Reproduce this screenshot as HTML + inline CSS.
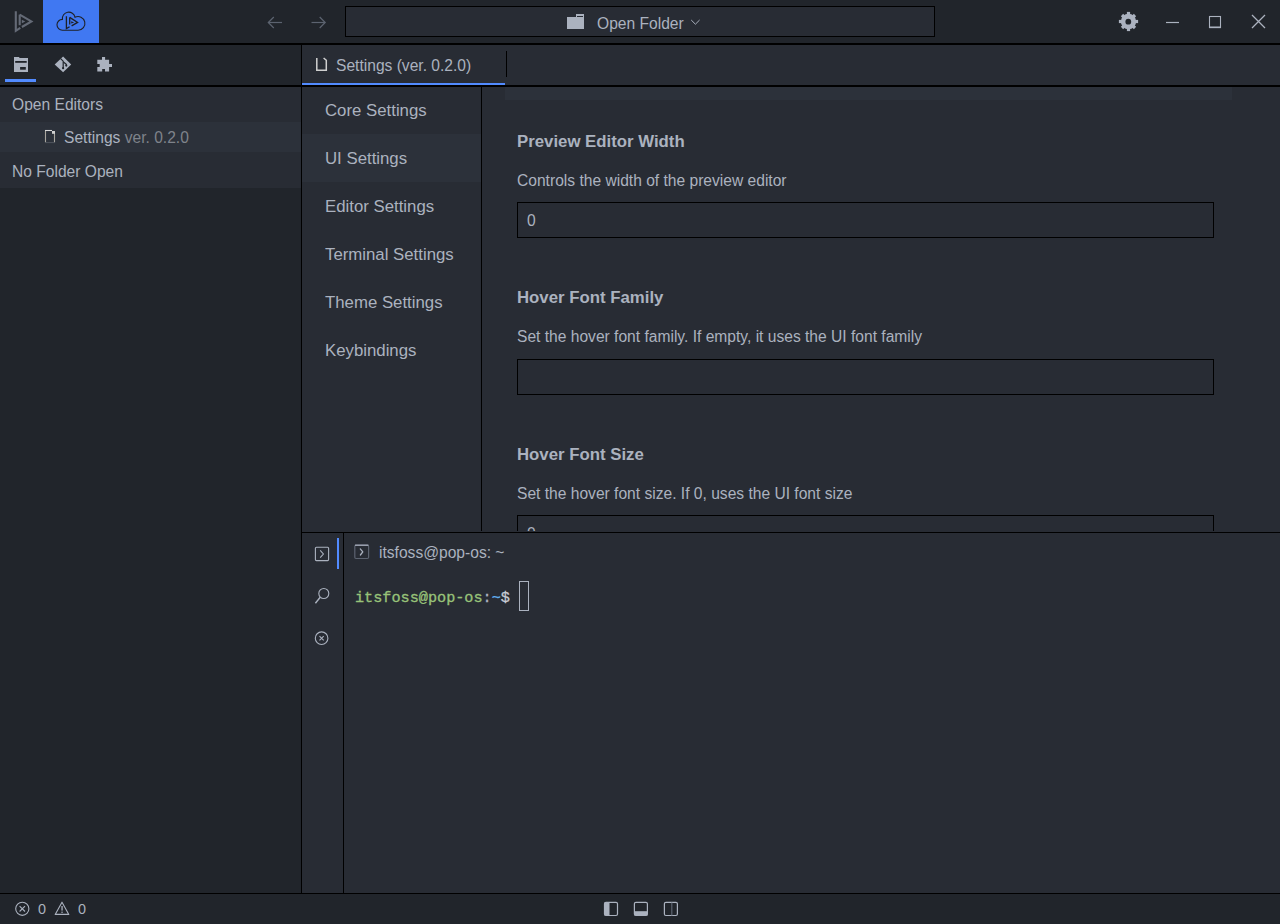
<!DOCTYPE html>
<html><head><meta charset="utf-8">
<style>
html,body{margin:0;padding:0;width:1280px;height:924px;overflow:hidden;background:#282C34;}
body{position:relative;font-family:"Liberation Sans",sans-serif;color:#ABB2BF;}
.a{position:absolute;}
.t{position:absolute;line-height:1;white-space:nowrap;}
.bk{position:absolute;background:#000;}
svg{position:absolute;overflow:visible;}
.ov{pointer-events:none;}
</style></head><body>

<!-- title bar -->
<div class="a" style="left:0;top:0;width:1280px;height:43px;background:#21252B;"></div>
<div class="bk" style="left:0;top:43px;width:1280px;height:2px;"></div>
<div class="a" style="left:43px;top:0;width:56px;height:43px;background:#4078F2;"></div>
<div class="a" style="left:345px;top:6px;width:588px;height:29px;border:1px solid #000;background:#282C34;"></div>
<div class="t" style="left:597px;top:15.6px;font-size:15.6px;color:#ABB2BF;">Open Folder</div>

<!-- left panel -->
<div class="a" style="left:0;top:45px;width:301px;height:848px;background:#21252B;"></div>
<div class="bk" style="left:301px;top:45px;width:1px;height:848px;"></div>
<div class="bk" style="left:0;top:85px;width:301px;height:2px;"></div>
<div class="a" style="left:5px;top:79px;width:31px;height:3px;background:#528BFF;"></div>
<div class="a" style="left:0;top:87px;width:301px;height:35px;background:#282C34;"></div>
<div class="a" style="left:0;top:122px;width:301px;height:30px;background:#2C313A;"></div>
<div class="a" style="left:0;top:152px;width:301px;height:36px;background:#282C34;"></div>
<div class="t" style="left:12px;top:96.6px;font-size:15.6px;">Open Editors</div>
<div class="t" style="left:64px;top:129.6px;font-size:15.6px;">Settings <span style="color:#7F838B">ver. 0.2.0</span></div>
<div class="t" style="left:12px;top:163.6px;font-size:15.6px;">No Folder Open</div>

<!-- editor tab bar -->
<div class="bk" style="left:302px;top:85px;width:978px;height:2px;"></div>
<div class="a" style="left:302px;top:83px;width:203px;height:2px;background:#528BFF;"></div>
<div class="bk" style="left:506px;top:51px;width:1px;height:26px;"></div>
<div class="t" style="left:336px;top:57.6px;font-size:15.6px;">Settings (ver. 0.2.0)</div>

<!-- settings sidebar -->
<div class="bk" style="left:481px;top:87px;width:1px;height:444px;"></div>
<div class="a" style="left:302px;top:134px;width:179px;height:48px;background:#2C313A;"></div>
<div class="t" style="left:325px;top:102.6px;font-size:16.8px;">Core Settings</div>
<div class="t" style="left:325px;top:150.6px;font-size:16.8px;">UI Settings</div>
<div class="t" style="left:325px;top:198.6px;font-size:16.8px;">Editor Settings</div>
<div class="t" style="left:325px;top:246.6px;font-size:16.8px;">Terminal Settings</div>
<div class="t" style="left:325px;top:294.6px;font-size:16.8px;">Theme Settings</div>
<div class="t" style="left:325px;top:342.6px;font-size:16.8px;">Keybindings</div>

<!-- settings content -->
<div class="a" style="left:482px;top:87px;width:798px;height:444px;overflow:hidden;">
  <div class="a" style="left:23px;top:0;width:727px;height:13px;background:#2C313A;"></div>
  <div class="t" style="left:35px;top:47.1px;font-size:16.8px;font-weight:bold;">Preview Editor Width</div>
  <div class="t" style="left:35px;top:85.6px;font-size:15.6px;">Controls the width of the preview editor</div>
  <div class="a" style="left:35px;top:115px;width:695px;height:34px;border:1px solid #000;"></div>
  <div class="t" style="left:45px;top:126.1px;font-size:15.6px;">0</div>

  <div class="t" style="left:35px;top:202.6px;font-size:16.8px;font-weight:bold;">Hover Font Family</div>
  <div class="t" style="left:35px;top:242.1px;font-size:15.6px;">Set the hover font family. If empty, it uses the UI font family</div>
  <div class="a" style="left:35px;top:272px;width:695px;height:34px;border:1px solid #000;"></div>

  <div class="t" style="left:35px;top:359.6px;font-size:16.8px;font-weight:bold;">Hover Font Size</div>
  <div class="t" style="left:35px;top:398.6px;font-size:15.6px;">Set the hover font size. If 0, uses the UI font size</div>
  <div class="a" style="left:35px;top:428px;width:695px;height:34px;border:1px solid #000;"></div>
  <div class="t" style="left:45px;top:439.1px;font-size:15.6px;">0</div>
</div>

<!-- terminal -->
<div class="bk" style="left:302px;top:532px;width:978px;height:1px;"></div>
<div class="bk" style="left:343px;top:533px;width:1px;height:360px;"></div>
<div class="a" style="left:337px;top:538px;width:2px;height:31px;background:#528BFF;"></div>
<div class="t" style="left:379px;top:545.1px;font-size:15.6px;">itsfoss@pop-os: ~</div>
<div class="t" style="left:355px;top:590.8px;font-size:15.2px;font-family:'Liberation Mono',monospace;-webkit-text-stroke:0.3px currentColor;"><span style="color:#98C379">itsfoss@pop-os</span><span style="color:#ABB2BF">:</span><span style="color:#61AFEF">~</span><span style="color:#C8CCD4">$</span></div>
<div class="a" style="left:519px;top:581px;width:8px;height:28px;border:1px solid #ABB2BF;"></div>




<!-- status bar -->
<div class="bk" style="left:0;top:893px;width:1280px;height:1px;"></div>
<div class="a" style="left:0;top:894px;width:1280px;height:30px;background:#21252B;"></div>
<div class="t" style="left:38px;top:901.6px;font-size:14.4px;">0</div>
<div class="t" style="left:78px;top:901.6px;font-size:14.4px;">0</div>

<svg class="ov" width="1280" height="924" viewBox="0 0 1280 924" style="left:0;top:0;">
<!-- lapce logo -->
<g fill="none" stroke="#646A76" stroke-width="2.1" stroke-linejoin="miter">
  <path d="M15.8,11.2 V30.8 L20.3,27.8"/>
  <path d="M19.7,14.6 V25.2"/>
  <path d="M19.7,14.6 L31.4,21.4 L21.9,27.0"/>
</g>
<polygon points="21.8,19.8 25.3,21.6 21.8,23.3" fill="#646A76"/>
<!-- cloud -->
<g fill="none" stroke="#1E2127" stroke-width="1.2">
  <path d="M62.4,30.25 A5.4,5.4 0 0 1 62.4,19.4 A6.4,6.4 0 0 1 75,17.2 A6.9,6.9 0 1 1 78,30.3 Z" stroke-width="1.1"/>
  <path d="M66.4,16.3 V28.6 L69.6,26.7" stroke-width="1.3"/>
  <path d="M69.7,17.4 V24.4" stroke-width="1.3"/>
  <path d="M69.7,17.4 L77.6,22.4 L71.6,25.9" stroke-width="1.3"/>
</g>
<polygon points="71.2,21.2 74.2,22.4 71.2,23.6" fill="#1E2127"/>
<!-- arrows -->
<g fill="none" stroke="#5C6370" stroke-width="1.2">
  <path d="M268.5,22.5 H282"/><path d="M273.8,17 L268.3,22.5 L273.8,28"/>
  <path d="M311.5,22.5 H325"/><path d="M319.7,17 L325.2,22.5 L319.7,28"/>
</g>
<!-- folder -->
<path d="M567,17 H576 V14 H584 V29 H567 Z" fill="#ABB2BF"/>
<rect x="577" y="16" width="6" height="1" fill="#282C34"/>
<path d="M691.2,20 L695.4,24.2 L699.6,20" fill="none" stroke="#ABB2BF" stroke-width="1"/>
<!-- gear -->
<g fill="#ABB2BF">
  <circle cx="1128.5" cy="21.5" r="7.7"/>
  <rect x="1126.9" y="11.9" width="3.2" height="19.2"/>
  <rect x="1118.9" y="19.9" width="19.2" height="3.2"/>
  <rect x="1126.9" y="12.3" width="3.2" height="18.4" transform="rotate(45 1128.5 21.5)"/>
  <rect x="1126.9" y="12.3" width="3.2" height="18.4" transform="rotate(-45 1128.5 21.5)"/>
</g>
<circle cx="1128.3" cy="21.7" r="2.9" fill="#21252B"/>
<!-- window controls -->
<path d="M1166,22.5 H1179" stroke="#ABB2BF" stroke-width="1.2"/>
<rect x="1209.5" y="16.5" width="11" height="11" fill="none" stroke="#ABB2BF" stroke-width="1.1"/>
<rect x="1209" y="26.5" width="12" height="1.6" fill="#ABB2BF"/>
<path d="M1252,15 L1265,28 M1265,15 L1252,28" stroke="#ABB2BF" stroke-width="1.3"/>
<!-- explorer icon -->
<path d="M14,57 H19 L19.6,58 H28 V72 H14 Z" fill="#ABB2BF"/>
<rect x="15.2" y="61" width="11.5" height="1.8" fill="#21252B"/>
<rect x="20.1" y="67" width="5.7" height="2.7" fill="#21252B"/>
<!-- git icon -->
<polygon points="54.7,64.5 63.1,56.6 71.2,64.5 63.1,72.3" fill="#ABB2BF"/>
<g fill="none" stroke="#21252B" stroke-width="1.2">
  <path d="M60.6,58.6 L63.2,61.2 V68"/>
  <path d="M63.4,62 L66.3,64.4 V65.6"/>
</g>
<circle cx="63.1" cy="68.2" r="1.1" fill="#21252B"/>
<circle cx="66.3" cy="65.6" r="1.1" fill="#21252B"/>
<!-- puzzle -->
<path d="M97.3,59.8 H102 V57 H105.1 V59.8 H109.1 V63.9 H112 V67 H109.1 V71.5 H105 V68.9 H102.2 V71.5 H97.3 V66.9 H99.7 V64 H97.3 Z" fill="#ABB2BF"/>
<!-- file icons -->
<path d="M45.5,130.5 V142.5 M54.5,133 V142.5" fill="none" stroke="#A8A59E" stroke-width="1.1"/>
<path d="M45,130.5 H52" fill="none" stroke="#D8D8D8" stroke-width="1.1"/>
<path d="M45,142.6 H55" fill="none" stroke="#50555E" stroke-width="1"/>
<rect x="52" y="131" width="3" height="2.8" fill="#D0D0D0"/>
<g fill="none" stroke="#D0D0D0" stroke-width="1.5">
  <path d="M316.8,57.9 V70.3 H326.3 V60.3 L323.6,58"/>
</g>
<!-- terminal column icons -->
<g fill="none" stroke="#ABB2BF" stroke-width="1.1">
  <rect x="315.4" y="547.3" width="13.2" height="13.3" rx="1"/>
  <path d="M320.2,550.4 L323.4,554 L320.2,557.6"/>
  <circle cx="323.8" cy="593.5" r="5"/>
  <path d="M320.2,597.3 L315.4,603.2" stroke-width="1.4"/>
  <circle cx="321.6" cy="638.2" r="6.3"/>
  <path d="M319.5,636.1 L323.7,640.3 M323.7,636.1 L319.5,640.3"/>
</g>
<!-- terminal tab icon -->
<rect x="354.8" y="545.2" width="13.8" height="13.3" rx="1.2" fill="none" stroke="#5C6370" stroke-width="1.2"/>
<path d="M355,545.2 H368.4" stroke="#ABB2BF" stroke-width="1.2"/>
<path d="M360.3,548.9 L362.8,551.8 L360.4,555" fill="none" stroke="#ABB2BF" stroke-width="1.3" stroke-linecap="round" stroke-linejoin="round"/>
<!-- status bar icons -->
<g fill="none" stroke="#ABB2BF" stroke-width="1.1">
  <circle cx="22.3" cy="908.8" r="6.6"/>
  <path d="M19.6,906.1 L25,911.5 M25,906.1 L19.6,911.5"/>
  <path d="M62,902.2 L68.8,914.4 H55.2 Z" stroke-linejoin="round"/>
</g>
<rect x="61.4" y="906" width="1.3" height="4.6" fill="#ABB2BF"/>
<rect x="61.4" y="911.6" width="1.3" height="1.3" fill="#ABB2BF"/>
<g fill="none" stroke="#ABB2BF" stroke-width="1.2">
  <rect x="604.5" y="902.3" width="13" height="13.2" rx="1.5"/>
  <rect x="634.4" y="902.3" width="13" height="13.2" rx="1.5"/>
  <rect x="664.4" y="902.3" width="13" height="13.2" rx="1.5"/>
</g>
<rect x="604.5" y="902.5" width="5" height="13" fill="#ABB2BF"/>
<rect x="634.5" y="911.2" width="13" height="4.3" fill="#ABB2BF"/>
<path d="M671.8,902.5 V915.5" stroke="#5C6370" stroke-width="1.2"/>
</svg>
</body></html>
